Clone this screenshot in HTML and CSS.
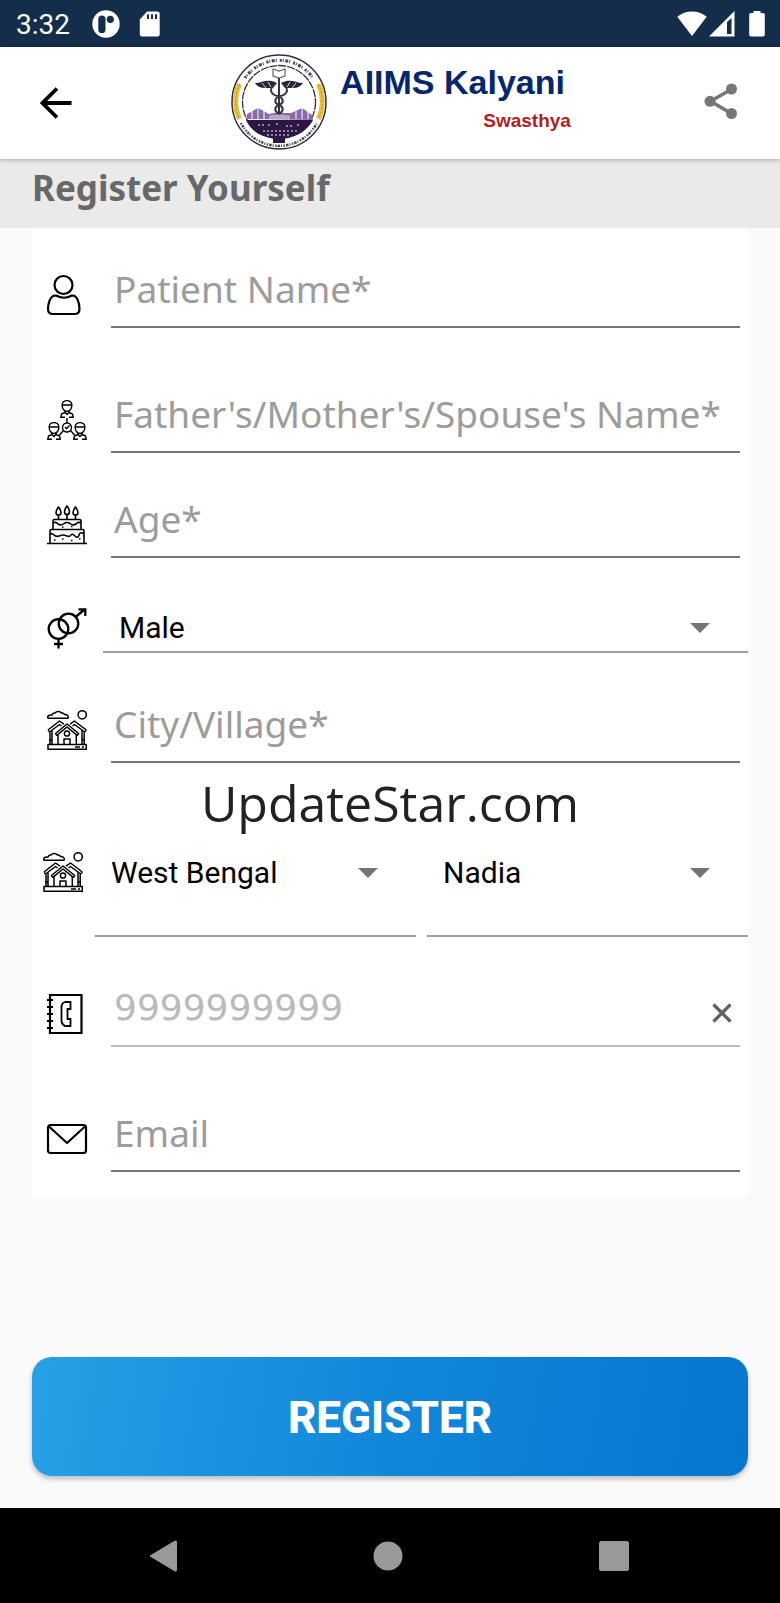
FILE: index.html
```html
<!DOCTYPE html>
<html lang="en">
<head>
<meta charset="utf-8">
<meta name="viewport" content="width=device-width, initial-scale=1">
<title>AIIMS Kalyani Swasthya</title>
<link rel="stylesheet" href="styles.css">
</head>
<body>
<svg class="defs" width="0" height="0" aria-hidden="true">
  <symbol id="houses" viewBox="0 0 40 40">
    <g fill="none" stroke="#000" stroke-width="1.500" stroke-linejoin="round">
      <path d="M1 8.300C0 6 2 4.500 5 5C5.500 3 7 2.800 8 3C9.500 1 13 1 14.500 3C16 2.700 17 3.500 17.500 4.600C20 4.300 22 6 21 8.300Z"/>
      <circle cx="35.200" cy="4.800" r="4.100"/>
      <path d="M1 34.500H39.300V39.300H1ZM28 37H33M35 37H37"/>
      <path d="M1 20L12.500 11L17 14.200M1 20L2.500 22L12.500 14.500L14.500 16M39.300 20L27.500 11L23 14.200M39.300 20L37.700 22L27.500 14.500L25.500 16"/>
      <path d="M3 22.500V34.500M5 20.500V34.500M37.200 22.500V34.500M35 20.500V34.500M2 30H5M35 30H38"/>
      <path d="M8.500 23.500L20 14L31.700 23.500L30.300 25.300L20 17L9.800 25.300Z"/>
      <path d="M11 25V34.500M29.300 25V34.500M17 34.500V29H23V34.500"/>
      <circle cx="20" cy="23.500" r="2.600"/>
    </g>
  </symbol>
  <symbol id="bust" viewBox="0 0 14 18">
    <g fill="none" stroke="#000" stroke-width="1.400" stroke-linejoin="round">
      <path d="M2.200 5.500C1.500 -1 12.500 -1 11.800 5.500C11.800 9 9.500 11.500 7 11.500S2.200 9 2.200 5.500ZM2.300 5H11.700"/>
      <path d="M5 11V12.500L1.500 14L.7 17.300H5M9 11V12.500L12.500 14L13.300 17.300H9M5 12.500L7 14.500L9 12.500"/>
    </g>
  </symbol>
</svg>
<div class="screen">
  <div class="status">
    <span class="time">3:32</span>
    <svg class="s-app" width="28" height="28" viewBox="0 0 28 28" aria-hidden="true"><circle cx="14" cy="14" r="13.700" fill="#fff"/><rect x="6.300" y="5.500" width="7.200" height="17.500" rx="3.600" fill="#142d4a"/><circle cx="18.300" cy="9.300" r="3.600" fill="#142d4a"/></svg>
    <svg width="22" height="26" viewBox="0 0 22 26" aria-hidden="true"><path d="M8 .5H18.500A2.200 2.200 0 0 1 20.700 2.700V23.300A2.200 2.200 0 0 1 18.500 25.500H3A2.200 2.200 0 0 1 .8 23.300V8.500Z" fill="#fff"/><path d="M9 3.300V8M13 3.300V8M17 3.300V8" stroke="#142d4a" stroke-width="2"/></svg>
    <svg class="s-wifi" width="30" height="26" viewBox="0 0 30 26" aria-hidden="true"><path d="M.3 5.800C8.500-1.300 21.500-1.300 29.700 5.800L15 25Z" fill="#fff"/></svg>
    <svg width="26" height="26" viewBox="0 0 26 26" aria-hidden="true"><path d="M0 25.500L25.500 0V25.500Z" fill="#fff"/><path d="M18 11L22.500 7V23H18Z" fill="#142d4a"/></svg>
    <svg class="s-bat" width="16" height="26" viewBox="0 0 16 26" aria-hidden="true"><path d="M4.500 0H11.500V2H14A1.800 1.800 0 0 1 15.800 3.800V23.700A1.800 1.800 0 0 1 14 25.500H2A1.800 1.800 0 0 1 .2 23.700V3.800A1.800 1.800 0 0 1 2 2H4.500Z" fill="#fff"/></svg>
  </div>
  <header class="topbar">
    <button class="iconbtn" type="button" aria-label="Back"><svg width="32" height="32" viewBox="0 0 32 32"><path d="M17 1.500L2.500 16L17 30.500M3 16H31.500" fill="none" stroke="#000" stroke-width="3.800"/></svg></button>
    <div class="brand">
      <svg width="96" height="96" viewBox="0 0 96 96" role="img" aria-label="AIIMS Kalyani seal">
        <circle cx="48" cy="48" r="47" fill="#fff" stroke="#332c42" stroke-width="1.500"/>
        <circle cx="48" cy="48" r="36.500" fill="none" stroke="#332c42" stroke-width="1.300" stroke-dasharray="8 1"/>
        <g fill="none" stroke="#4a4658">
          <path d="M14 24A41.500 41.500 0 0 1 82 24" stroke-width="3" stroke-dasharray="2 1 1 1.500 3 1 1 3"/>
          <path d="M10 69A43 43 0 0 0 86 69" stroke-width="2.500" stroke-dasharray="1.500 1 2.500 1 1 1.500"/>
        </g>
        <g fill="none" stroke="#e8c13c" stroke-width="5"><path d="M8.500 30A43 43 0 0 0 8.500 65M87.500 30A43 43 0 0 1 87.500 65"/></g>
        <g fill="none" stroke="#b08e2c" stroke-width="1" stroke-dasharray="2 2"><path d="M8.500 30A43 43 0 0 0 8.500 65M87.500 30A43 43 0 0 1 87.500 65"/></g>
        <path d="M15.500 65L16 60L27 54L38 60L43 59H54L60 59L71 54L81 61L82 66Z" fill="#8a6ba8"/>
        <path d="M27 54V65M21 57V65M33 57V65M71 54V65M65 57V65M77 58V65" stroke="#fff" stroke-width="1"/>
        <path d="M15 66H82C76 77 66 83 54 84V89H42V84C30 83 20 77 15 66Z" fill="#2b1742"/>
        <path d="M38 62C43 60 53 60 59 62V65H38Z" fill="#b9a6c9"/>
        <path d="M27 71H33M37 71H40M45 70H48M55 72H62M66 71H69M32 77H66M36 81H60" stroke="#b6a8c6" stroke-width="1.500" stroke-dasharray="2 2"/>
        <path d="M24 29C32 29 36 24 46 29L42 34H34Q27 34 24 29ZM72 29C64 29 60 24 50 29L54 34H62Q69 34 72 29Z" fill="#292536"/>
        <path d="M31 29L35 34M37 28L40 33M65 29L61 34M59 28L56 33" stroke="#fff" stroke-width=".8"/>
        <path d="M42 15L48 17L54 15V22L48 24L42 22Z" fill="#fff" stroke="#6b6250" stroke-width="1.200"/>
        <g fill="none" stroke="#37333f" stroke-width="2"><path d="M48 24V60M43 31C37 36 41 42 48 42S59 36 53 31M48 42C43 45 43 49 48 51S53 57 48 60M48 42C53 45 53 49 48 51S43 57 48 60"/></g>
      </svg>
      <div class="names"><h1>AIIMS Kalyani</h1><span>Swasthya</span></div>
    </div>
    <button class="iconbtn share" type="button" aria-label="Share"><svg width="34" height="36" viewBox="0 0 34 36"><path d="M27.500 6.300L6.500 18.300L27.500 30.500" fill="none" stroke="#777" stroke-width="3.500"/><g fill="#777"><circle cx="27.500" cy="6" r="5.500"/><circle cx="6" cy="18.300" r="5.500"/><circle cx="27.500" cy="30.500" r="5.500"/></g></svg></button>
  </header>
  <h2 class="title">Register Yourself</h2>
  <form class="form">
    <div class="card">
      <div class="row r100">
        <label for="name" aria-label="Patient name"><svg viewBox="0 0 40 40"><g fill="none" stroke="#000" stroke-width="2.200"><circle cx="16.500" cy="10" r="9"/><path d="M9 20.500C3 20 1 29 1 34Q1 39 6 39H27.500Q32.500 39 32.500 34C32.500 29 30.500 20 25 20.500Q17 25 9 20.500Z"/></g></svg></label>
        <input id="name" type="text" placeholder="Patient Name*">
      </div>
      <div class="row r125">
        <label for="guardian" aria-label="Guardian name"><svg viewBox="0 0 40 40"><use href="#bust" x="13" y="0" width="14" height="18"/><use href="#bust" x="0" y="22" width="14" height="18"/><use href="#bust" x="26" y="22" width="14" height="18"/><g fill="none" stroke="#000" stroke-width="1.400"><path d="M20 18V23M16.500 30.500L12.500 35M23.500 30.500L27.500 35M18 27L19.500 28.700L22.500 25.500"/><circle cx="20" cy="27.500" r="4.500"/></g></svg></label>
        <input id="guardian" type="text" placeholder="Father's/Mother's/Spouse's Name*">
      </div>
      <div class="row r105">
        <label for="age" aria-label="Age"><svg viewBox="0 0 40 40"><g fill="none" stroke="#000" stroke-width="1.600" stroke-linejoin="round"><path d="M0 38.500H40M3 38.500V26Q3 24.500 4.500 24.500H35.500Q37 24.500 37 26V38.500M6 24.500V16Q6 14.500 7.500 14.500H32.500Q34 14.500 34 16V24.500M3 29Q5 28 7 30T12 31T16 30T20 31T24 30T28 31T32 30T37 29M6 18Q9 16.500 11 19Q14 21 17 18.500Q20 16.500 23 18.500Q26 21 29 19Q31 16.500 34 18M11.500 14.500V9.500M20 14.500V9.500M28.500 14.500V9.500"/><path d="M11.500 2C7.500 7.500 9 10 11.500 10S15.500 7.500 11.500 2ZM20 1C16 6.500 17.500 9.500 20 9.500S24 6.500 20 1ZM28.500 2C24.500 7.500 26 10 28.500 10S32.500 7.500 28.500 2Z"/></g><path d="M7 35H8.500M15 34H16.500M24 35.500H25.500M32 34H33.500M15 22H16.500M24 21.500H25.500" stroke="#000" stroke-width="1.300"/></svg></label>
        <input id="age" type="text" placeholder="Age*">
      </div>
      <div class="row r95 gender">
        <label for="gender" aria-label="Gender"><svg viewBox="0 0 40 40"><g fill="none" stroke="#000" stroke-width="2.300"><circle cx="11.500" cy="21" r="9.800"/><circle cx="21.500" cy="15.500" r="9.800"/><path d="M28.500 9L37.500 1.500M31.500 1.300H38.300V8M11.500 31V40.500M7 36H16"/></g></svg></label>
        <div class="pick"><select id="gender"><option>Male</option><option>Female</option></select><i class="caret"></i></div>
      </div>
      <div class="row r110">
        <label for="city" aria-label="City or village"><svg viewBox="0 0 40 40"><use href="#houses"/></svg></label>
        <input id="city" type="text" placeholder="City/Village*">
      </div>
      <p class="mark">UpdateStar.com</p>
      <div class="row region">
        <label for="state" aria-label="State and district"><svg viewBox="0 0 40 40"><use href="#houses"/></svg></label>
        <div class="pick"><select id="state"><option>West Bengal</option></select><i class="caret"></i></div>
        <div class="pick"><select id="district" aria-label="District"><option>Nadia</option></select><i class="caret"></i></div>
      </div>
      <div class="row r110">
        <label for="phone" aria-label="Phone"><svg viewBox="0 0 40 40"><g fill="none" stroke="#000" stroke-width="2.200"><path d="M3 1H34.500V39H3ZM0 6H6M0 13H6M0 20H6M0 27H6M0 34H6"/><path d="M18 8H23.500V15H20.500V25H23.500V32H18Q14.500 30 14.500 27V13Q14.500 9 18 8Z" stroke-width="1.800"/></g></svg></label>
        <input id="phone" class="locked" type="tel" value="9999999999" disabled>
        <button class="clear" type="button" aria-label="Clear phone"><svg width="20" height="20" viewBox="0 0 20 20"><path d="M1.500 1.500L18.500 18.500M18.500 1.500L1.500 18.500" stroke="#616161" stroke-width="3.300"/></svg></button>
      </div>
      <div class="row r125">
        <label for="email" aria-label="Email"><svg viewBox="0 0 40 40"><g fill="none" stroke="#000" stroke-width="2.200" stroke-linejoin="round"><rect x="1" y="6" width="38" height="28" rx="2.500"/><path d="M2 7.500L20 24L38 7.500"/></g></svg></label>
        <input id="email" type="email" placeholder="Email">
      </div>
    </div>
    <button class="register" type="submit">REGISTER</button>
  </form>
  <nav class="sysnav" aria-label="System">
    <button type="button" aria-label="Back"><svg width="30" height="32" viewBox="1 0 30 32"><path d="M3 16L28 1Q29.500 .5 29.500 2V30Q29.500 31.500 28 31Z" fill="#999" stroke="#999" stroke-linejoin="round"/></svg></button>
    <button type="button" aria-label="Home"><svg width="30" height="30" viewBox="0 0 30 30"><circle cx="15" cy="15" r="14.500" fill="#999"/></svg></button>
    <button type="button" aria-label="Recents"><svg width="30" height="30" viewBox="0 0 30 30"><rect width="30" height="30" rx="2.500" fill="#999"/></svg></button>
  </nav>
</div>
</body>
</html>
```
FILE: styles.css
```css
* { box-sizing: border-box; }
body { margin: 0; background: #fafafa; font-family: Roboto, sans-serif; color: #000; }
button { border: 0; padding: 0; background: none; cursor: pointer; }
button svg { display: block; }
h1, h2, p { margin: 0; }
.defs { position: absolute; }
.screen { min-height: 100vh; display: flex; flex-direction: column; }

.status { height: 47px; padding: 0 15px 0 16px; background: #142d4a; display: flex; align-items: center; }
.time { color: #fff; font-size: 28px; line-height: 32px; padding-top: 2px; margin-right: 22px; }
.s-app { margin-right: 19px; }
.s-wifi { margin-left: auto; margin-right: 2px; }
.s-bat { margin-left: 14px; }

.topbar { height: 112px; padding: 0 42px 0 40px; background: #fff; display: flex; align-items: center; justify-content: space-between; box-shadow: 0 1px 4px rgba(0, 0, 0, .3); position: relative; }
.brand { display: flex; align-items: center; gap: 13px; padding: 0 0 2px 26px; }
.brand svg { display: block; }
.names { display: flex; flex-direction: column; align-items: flex-end; font-family: "Liberation Sans", Arial, sans-serif; font-weight: 700; padding-bottom: 2px; }
.names h1 { font-size: 34px; line-height: 40px; color: #06266e; padding-right: 6px; }
.names span { font-size: 19px; line-height: 38px; color: #b11f20; }
.share { padding-bottom: 4px; }

.title { height: 69px; padding: 0 32px; background: #eaeaea; color: #686868; font: 700 35px/58px "Noto Sans", sans-serif; }

.form { flex: 1; display: flex; flex-direction: column; padding: 0 32px 32px; }
.card { background: #fff; padding-bottom: 24px; }
.row { display: flex; align-items: flex-end; padding: 0 8px 0 15px; position: relative; }
.r95 { height: 95px; }
.r100 { height: 100px; }
.r105 { height: 105px; }
.r110 { height: 110px; }
.r125 { height: 125px; }
.row label { flex: none; width: 64px; padding-bottom: 13px; }
.row label svg { display: block; width: 40px; height: 40px; overflow: visible; }
.row input { flex: 1; min-width: 0; height: 80px; padding: 2px 3px 0; border: 0; border-bottom: 2px solid #757575; border-radius: 0; background: none; font: 400 37px "Noto Sans", sans-serif; color: #333; outline: 0; }
.row input::placeholder { color: #9c9c9c; opacity: 1; }
.row input.locked { font: 400 36px "DejaVu Sans", sans-serif; color: #bababa; border-bottom-color: #bcbcbc; }
.clear { position: absolute; right: 16px; bottom: 24px; }

.pick { flex: 1; min-width: 0; position: relative; border-bottom: 2px solid #a0a0a0; }
.pick select { display: block; width: 100%; height: 48px; padding: 0 60px 0 16px; border: 0; border-radius: 0; background: none; appearance: none; font: 400 30px Roboto, sans-serif; color: #000; outline: 0; }
.caret { position: absolute; right: 38px; top: 50%; margin-top: -4px; border: 10px solid transparent; border-top-color: #757575; border-bottom: 0; pointer-events: none; }
.row.gender { padding-right: 0; }
.gender label { width: 56px; padding-bottom: 5px; }

.mark { height: 80px; text-align: center; font: 400 50px/80px "Open Sans", "Noto Sans", sans-serif; color: #222; }
.row.region { padding: 0 0 0 11px; height: 94px; align-items: stretch; gap: 11px; }
.region label { width: 41px; padding: 9px 0 0; }
.region .pick select { height: 58px; }
.region .caret { top: 29px; }

.register { margin-top: auto; height: 119px; padding-top: 2px; border-radius: 20px; background: linear-gradient(100deg, #27a0e6, #1287da 50%, #0676d1); box-shadow: 0 3px 5px rgba(0, 0, 0, .25); color: #fff; font: 800 44px Roboto, sans-serif; }

.sysnav { height: 95px; padding: 0 53px 0 50px; background: #000; display: grid; grid-template-columns: repeat(3, 1fr); place-items: center; }
```
